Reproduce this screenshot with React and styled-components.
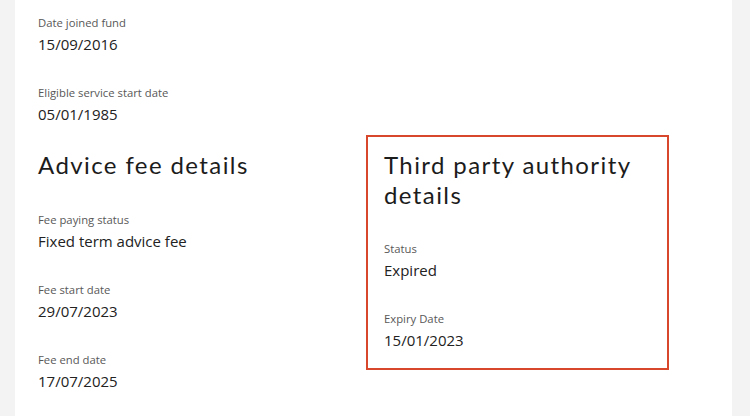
import React from 'react';
import styled, { createGlobalStyle } from 'styled-components';

const GlobalStyle = createGlobalStyle`
  html, body {
    margin: 0;
    padding: 0;
    background: #f3f3f3;
  }
  body {
    font-family: "Open Sans", "Liberation Sans", sans-serif;
  }
`;

/* grey page behind the white card */
const Page = styled.div`
  width: 750px;
  height: 416px;
  overflow: hidden;
  background: #f3f3f3;
  padding: 0 18px 0 15px;
  box-sizing: border-box;
`;

const Card = styled.div`
  background: #fff;
  height: 100%;
  padding: 15px 23px 0 23px;
  box-sizing: border-box;
`;

const Field = styled.div`
  display: flex;
  flex-direction: column;
  gap: 3px;
  & + & {
    margin-top: 30px;
  }
`;

const Label = styled.div`
  font-size: 11.3px;
  line-height: 16px;
  color: #585858;
`;

const Value = styled.div`
  font-size: 15px;
  line-height: 21px;
  color: #222;
`;

const Columns = styled.div`
  display: grid;
  grid-template-columns: 328px 303px;
  margin-top: 10px;
  align-items: start;
`;

const Section = styled.section`
  padding: ${(p) => (p.$highlight ? '13px 16px 17px' : '15px 0 0')};
  border: ${(p) => (p.$highlight ? '2px solid #d8472b' : 'none')};
  box-sizing: border-box;
`;

const Heading = styled.h2`
  margin: 0 0 ${(p) => (p.$tight ? '31px' : '32px')};
  font-family: Lato, "Noto Sans", sans-serif;
  font-weight: 400;
  font-size: 24px;
  line-height: 30px;
  letter-spacing: 1.4px;
  color: #1c1c1c;
`;

const Detail = ({ label, value }) => (
  <Field>
    <Label>{label}</Label>
    <Value>{value}</Value>
  </Field>
);

export default function App() {
  return (
    <>
      <GlobalStyle />
      <Page>
        <Card>
          <Detail label="Date joined fund" value="15/09/2016" />
          <Detail label="Eligible service start date" value="05/01/1985" />
          <Columns>
            <Section>
              <Heading>Advice fee details</Heading>
              <Detail label="Fee paying status" value="Fixed term advice fee" />
              <Detail label="Fee start date" value="29/07/2023" />
              <Detail label="Fee end date" value="17/07/2025" />
            </Section>
            <Section $highlight>
              <Heading $tight>Third party authority details</Heading>
              <Detail label="Status" value="Expired" />
              <Detail label="Expiry Date" value="15/01/2023" />
            </Section>
          </Columns>
        </Card>
      </Page>
    </>
  );
}
